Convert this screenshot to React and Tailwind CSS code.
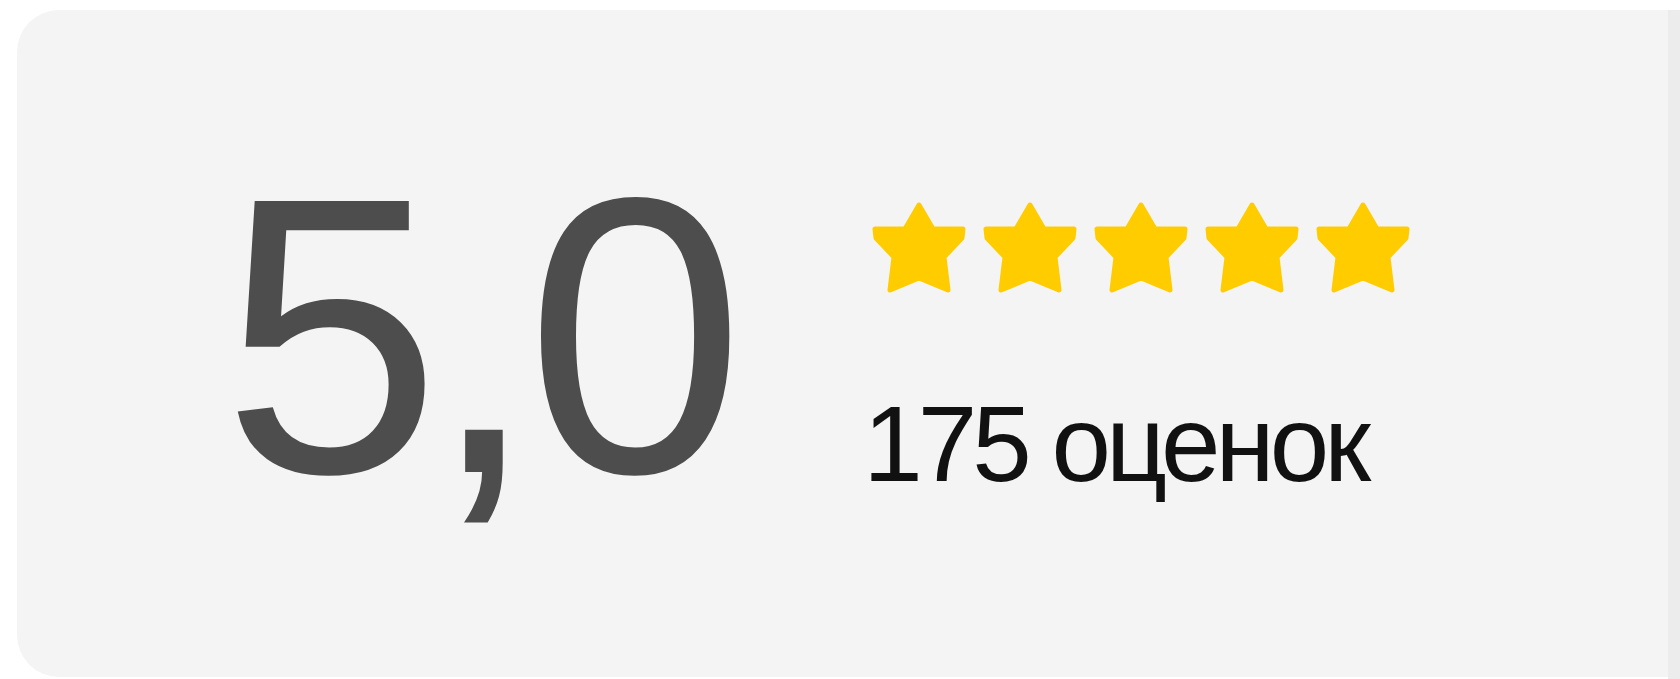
import React from 'react';

const Star = () => (
  <svg width="94" height="91" viewBox="0 0 94 91" className="shrink-0">
    <path
      d="M47 3 L61 27 L91 27 L90 36 L72 55 L76 88 L47 76 L18 88 L22 55 L4 36 L3 27 L33 27 Z"
      fill="#ffcc00"
      stroke="#ffcc00"
      strokeWidth="5"
      strokeLinejoin="round"
    />
  </svg>
);

const App = () => {
  return (
    <div className="w-[1680px] h-[679px] bg-white flex pt-[10px] overflow-hidden">
      {/* rating card */}
      <div className="ml-[17px] w-[1651px] h-[667px] bg-[#f4f4f4] rounded-l-[42px] flex items-start pl-[205px]">
        <div
          className="mt-[128px] text-[394px] leading-none text-[#4d4d4d] tracking-[-12.5px]"
          style={{ fontFamily: '"Liberation Sans", Arial, sans-serif' }}
        >
          5,0
        </div>

        <div className="ml-[131px] mt-[192px] flex flex-col">
          <div className="flex gap-[17px] ml-[9px]">
            <Star />
            <Star />
            <Star />
            <Star />
            <Star />
          </div>
          <div
            className="mt-[98px] text-[107px] leading-none text-[#111111] tracking-[-5px]"
            style={{ fontFamily: '"Liberation Sans", Arial, sans-serif' }}
          >
            175 оценок
          </div>
        </div>
      </div>

      {/* edge of the next block */}
      <div className="flex-1 bg-[#ececec]" />
    </div>
  );
};

export default App;
